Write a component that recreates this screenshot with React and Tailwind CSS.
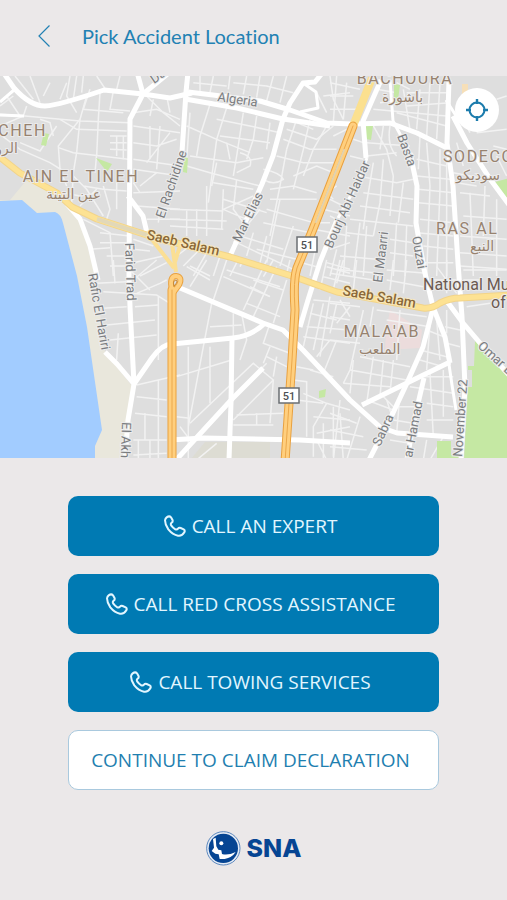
import { clsx } from "clsx"

const mainRoads = [
  "M3 72 L14 88 Q30 106 45 106 Q60 105 104 90 L143 94 L170 98 L192 93",
  "M137 72 L143 94 L130 119 L129 276 L130 307 L134 384",
  "M128 196 L143 216 L147 233",
  "M143 94 L170 72",
  "M188 72 L186 92 L182 152",
  "M188 92 L213 95 L260 101 L290 110 L327 123 L352 124 L390 123 L417 133 L447 148",
  "M185 99 L237 108 L283 119 L330 126",
  "M323 72 L315 82 L303 83 L290 103 L283 119 L273 156 L262 184 L248 216 L230 256",
  "M449 80 L447 143 L453 186 L458 263 L462 317 L465 387 L461 460",
  "M453 116 L467 143 L490 179 L510 206",
  "M410 153 L417 186 L416 223 L424 269 L433 307 L445 337 L450 363",
  "M381 80 L363 121 L366 158",
  "M337 220 L320 262 L308 300 L300 327",
  "M67 204 L80 219 L90 246 L98 280",
  "M105 352 L117 364 L134 384 L128 420 L125 460",
  "M134 384 L152 358 Q162 344 172 344 L233 338 Q252 336 265 323",
  "M180 288 L263 323 L283 330 L303 350 L350 400 L380 427 L397 433 L453 437",
  "M232 338 L231 403 L229 460",
  "M176 460 L233 398 L263 368",
  "M170 440 L203 438 L300 440 L350 443",
  "M433 308 L423 347 L407 383 L393 413 L369 460",
  "M362 405 L407 383 L450 362",
  "M424 378 L413 425 L407 460",
  "M446 300 L463 323 L480 343 L510 376",
]

const mediumRoads = [
  "M390 80 L393 121 L410 153",
  "M0 102 L14 90",
  "M303 83 L316 92 L318 108 L300 112",
  "M446 100 L460 122 L472 118",
  "M445 337 L452 385 L456 410",
  "M0 115 L24 116",
  "M367 158 L354 190 L338 218",
]

// Side streets, drawn district by district on a 3x finer grid
const districts = [
  {
    at: "translate(0 76) scale(0.3333)",
    streets: [
      "M0 115 L75 120 L240 135 L390 140",
      "M0 90 L40 60 M0 150 L70 120 L80 90 M20 60 L60 120",
      "M45 0 L100 70 M90 0 L120 80 M130 60 L150 20 M210 0 L200 60 L230 110 M180 70 L200 20 M230 0 L220 70",
      "M260 60 L240 130 L230 230 M300 50 L295 130 L290 240 M340 45 L330 100 L390 105",
      "M270 40 L250 100 L370 110 M250 0 L245 50 M290 0 L320 45 M360 0 L350 40",
      "M0 175 L60 220 L150 260 L190 285 M60 200 L120 225 L150 180 L170 150",
      "M120 130 L150 140 L160 180 M180 130 L230 160 L380 165 M175 215 L220 230 L385 250",
      "M240 130 L175 210 L180 280 L200 330 M230 230 L220 290 L215 380 M290 235 L285 290",
      "M330 200 L380 200 M330 220 L380 222 M350 180 L350 240 M370 180 L370 250 M330 180 L380 180",
      "M250 330 L310 340 L380 345 M220 300 L260 340 L310 420 M310 330 L330 400 L320 430 M350 320 L350 400",
      "M190 350 L240 360 L300 350 M240 390 L290 340 M400 250 L540 270 M400 280 L540 300",
      "M400 110 L470 100 L540 130 M400 150 L540 170 M430 50 L490 110 L540 150 M460 70 L450 120 M500 60 L510 110",
      "M400 200 L470 210 L530 190 M450 150 L450 250 M480 150 L470 280 M510 170 L440 260 M420 330 L470 290",
      "M400 350 L540 345 M410 390 L540 400 M440 430 L540 430 M480 400 L475 440 M400 320 L420 350",
      "M250 430 L330 470 L340 600 M300 470 L390 480 M300 500 L390 500 M320 540 L390 540 M330 570 L380 570",
      "M270 520 L330 515 M400 490 L460 510 M400 520 L450 525 M400 560 L490 540 M420 600 L500 560",
    ],
  },
  {
    at: "translate(170 76) scale(0.3333)",
    streets: [
      "M90 0 L90 50 M130 0 L120 50 M180 0 L175 40 M230 0 L220 55 M270 0 L260 65 M310 0 L290 75 M350 0 L330 80",
      "M70 20 L170 30 M190 20 L290 30 L370 50 M440 50 L470 110 M480 0 L490 70 L520 130 M460 60 L540 50",
      "M120 85 L90 180 L80 240 M170 95 L140 190 L115 380 M220 110 L200 240 L190 300 M50 150 L140 190 L240 230 M60 110 L50 250",
      "M140 130 L240 150 L330 170 M150 180 L300 200 M170 200 L180 250 M260 120 L250 190 L230 250 M300 140 L290 220",
      "M50 270 L120 290 L270 330 M60 240 L200 260 L280 245 M130 320 L250 340 M140 260 L125 330 M210 230 Q250 240 240 270 L200 290",
      "M280 280 Q330 290 340 310 Q310 330 280 310 M350 220 L330 330 L300 480 M380 130 L350 220 M420 130 L400 220 L370 340 M470 150 L430 220 L400 300",
      "M350 160 L440 190 L490 150 M340 190 L420 220 L500 220 M320 240 L400 260 L490 260 M370 300 L440 270 L490 290",
      "M380 140 L430 160 M300 340 L370 330 L440 350 M300 370 L440 370 M290 400 L430 440 M280 440 L420 470",
      "M160 370 L290 410 M160 400 L230 430 M160 340 L155 460 M160 400 L250 360 M200 310 L190 400 L220 440",
      "M0 400 L160 405 M0 430 L170 435 M0 450 L160 460 M50 400 L50 480 M80 400 L80 480 M110 330 L110 480",
      "M210 480 L340 520 M190 500 L270 400 M250 470 L230 540 M290 480 L270 560 M330 370 L290 560 M370 450 L330 570",
      "M260 520 L380 550 M200 500 L370 580 M460 400 L540 420 M450 440 L480 440 M440 500 L420 600 M480 520 L540 500",
      "M90 520 L40 570 M110 530 L70 600 M60 510 L20 540 M150 540 L130 600 M200 560 L180 600 M60 570 L120 600",
      "M430 460 L540 480 M490 370 L470 350 L500 330 M470 560 L540 580 M500 520 L480 600",
    ],
  },
  {
    at: "translate(330 76) scale(0.3333)",
    streets: [
      "M0 20 L90 40 M0 60 L70 60 M20 0 L10 140 M50 20 L40 130 M0 100 L80 100 M10 180 L50 160",
      "M140 40 L200 50 M150 80 L240 70 M130 100 L350 120 M220 40 L240 160 M270 40 L260 160 M300 20 L290 180 M330 20 L320 190",
      "M230 50 L350 50 M230 90 L360 80 M200 110 L350 150 M200 20 L240 40 M420 170 L400 130 M440 170 L530 160",
      "M110 200 L240 210 M110 240 L200 230 M130 150 L170 220 L190 300 M160 150 L150 220 M180 150 Q170 210 200 240",
      "M70 190 L100 200 M60 240 L100 250 M80 300 L200 320 L250 310 M100 350 L250 370 M90 390 L240 410",
      "M130 260 L110 380 L100 460 M160 250 L150 380 L130 480 M190 300 L180 420 M220 320 L205 440",
      "M260 250 L350 270 M260 300 L360 310 M265 340 L370 350 M265 380 L370 390 M270 430 L370 440 M260 470 L370 480",
      "M290 200 L300 330 L290 600 M330 220 L330 340 L320 600 M350 260 L350 600 M270 180 L265 280",
      "M60 430 L250 450 M50 470 L130 480 M180 490 L250 500 M180 530 L250 540 M30 540 L140 550 M20 580 L130 590",
      "M50 450 L40 600 M90 440 L70 600 M110 450 L100 600 M200 440 L190 600 M230 450 L225 600",
      "M390 350 L480 360 M380 320 L440 330 M400 420 L530 430 M390 480 L530 490 M390 530 L530 540 M390 570 L530 580",
      "M420 350 L430 600 M465 330 L460 480 M500 370 L500 600 M380 200 L400 270 M370 290 L470 310 M280 510 L370 520 M280 560 L370 560",
      "M0 370 L40 390 M0 420 L20 430 M530 60 L500 70 M490 210 L530 220 M500 240 L530 300",
    ],
  },
  {
    at: "translate(0 260) scale(0.3333)",
    streets: [
      "M290 70 L380 65 M310 95 L470 105 L510 130 M310 145 L380 140 M405 140 L475 135 M320 195 L465 180 M330 240 L470 225",
      "M340 0 L345 70 M410 100 L480 70 L500 60 M400 60 L470 0 M390 30 L450 90 M475 110 L475 300",
      "M410 375 L540 345 M410 410 L500 420 M475 360 L475 600 M405 460 L500 470 M435 460 L435 540 M400 540 L500 540 M415 540 L415 600 M450 540 L450 600 M400 585 L500 580",
      "M355 220 L350 300",
    ],
  },
  {
    at: "translate(170 260) scale(0.3333)",
    streets: [
      "M125 130 L100 260 L55 500 M55 260 L55 600 M190 160 L190 230 M120 200 L215 195 M120 260 L120 430 M20 350 L185 300",
      "M170 30 L330 80 M160 50 L300 110 M170 0 L150 60 L130 120 M50 20 L120 60 M110 0 L60 80 M60 490 L250 310 L310 360 L190 480",
      "M290 0 L220 150 M320 20 L250 170 M350 60 L310 190 M240 80 L300 110 M250 60 L340 90 M230 130 L330 170 M300 190 L280 250 L360 280",
      "M215 160 L230 240 L210 300 M290 290 L350 320 M300 260 L280 310 M320 290 L310 350 M310 360 L300 490 M270 330 L290 310",
      "M20 470 L60 475 M190 495 L310 495 M200 465 L340 460 M260 460 L260 495 M60 540 L30 500 M140 550 L80 600",
      "M380 320 L430 330 M370 360 L410 365 L410 530 M380 420 L460 430 M400 400 L470 430 L540 450 M470 430 L430 500 L430 590",
      "M440 520 L540 500 M460 490 L460 600 M490 440 L490 590 M510 460 L520 600 M430 470 L540 480 M440 540 L470 600",
      "M440 290 L480 240 M500 240 L460 340 M420 330 L490 350 M400 230 L540 250 M410 200 L540 210 M420 160 L500 180 M430 120 L540 130",
      "M430 130 L400 260 M460 130 L430 270 M480 110 L450 290 M510 120 L540 170 M500 190 L540 140 M460 50 L540 70 M470 20 L540 40 M470 0 L450 90 M510 0 L490 90",
      "M310 0 L280 50 M360 0 L350 40 M290 20 L360 40 M400 10 L440 20 M220 0 L210 20",
    ],
  },
  {
    at: "translate(330 260) scale(0.3333)",
    streets: [
      "M0 40 L130 60 M40 0 L20 70 M80 0 L70 90 M190 0 L180 90 M230 0 L220 100 M170 30 L290 40 M170 60 L280 80",
      "M0 130 L90 140 M0 170 L60 180 M0 240 L90 250 M20 130 L0 220 M100 150 L60 330 L40 370 M130 140 L120 200",
      "M140 150 L290 170 M170 180 L300 200 M90 290 L240 320 M60 330 L230 360 M70 300 L60 400 M130 290 L110 430 M160 300 L150 410 M190 300 L180 400",
      "M210 150 L200 300 M290 210 L340 230 M270 270 L350 290 M270 300 L340 320 M300 190 L290 330 M320 180 L330 300",
      "M40 370 L180 380 M110 420 L190 450 M150 400 L200 450 M170 420 L190 480 M90 470 L50 600 M30 420 L10 600 M0 460 L80 490 M0 510 L100 530 M0 560 L110 570",
      "M240 380 L370 400 M260 350 L370 350 M300 340 L310 530 M340 330 L340 470 M290 430 L370 440 M290 480 L370 480",
      "M200 440 L270 440 M190 480 L250 490 M180 540 L240 550 M210 400 L200 520 M290 540 L280 600 M340 530 L300 600 M320 20 L380 100 M310 60 L380 60 M350 0 L350 100",
      "M400 30 L530 30 M400 60 L450 60 M410 140 L480 130 M380 170 L350 130 M345 200 L390 210 M350 250 L390 260 M350 150 L350 220",
    ],
  },
]

const saebSalam =
  "M-4 154 L20 173 L57 193 L72 207 L97 219 L150 236 L230 257 L292 276 L337 292 L423 308 Q432 309 440 303 Q450 298 460 298 L510 295"
const highway = "M353 126 L313 229 L297 268 Q293 280 295 310 L292 360 L285 462"
const tunnel = "M172 290 L172 462"

const streetNames = [
  { text: "Algeria", x: 217, y: 101, turn: "rotate(8 217 101)" },
  { text: "El Rachidine", x: 164, y: 219, turn: "rotate(-71 164 219)" },
  { text: "Mar Elias", x: 240, y: 243, turn: "rotate(-64 240 243)" },
  { text: "Bourj Abi Haidar", x: 332, y: 249, turn: "rotate(-66 332 249)" },
  { text: "Basta", x: 397, y: 136, turn: "rotate(70 397 136)" },
  { text: "El Maarri", x: 382, y: 283, turn: "rotate(-83 382 283)" },
  { text: "Ouzai", x: 412, y: 237, turn: "rotate(80 412 237)" },
  { text: "Farid Trad", x: 125, y: 243, turn: "rotate(88 125 243)" },
  { text: "Rafic El Hariri", x: 88, y: 274, turn: "rotate(80 88 274)" },
  { text: "El Akhtal", x: 122, y: 422, turn: "rotate(92 122 422)" },
  { text: "Sabra", x: 380, y: 447, turn: "rotate(-65 380 447)" },
  { text: "Omar Hamad", x: 408, y: 478, turn: "rotate(-79 408 478)" },
  { text: "November 22", x: 462, y: 457, turn: "rotate(-86 462 457)" },
  { text: "Omar Beyhum", x: 477, y: 347, turn: "rotate(42 477 347)" },
  { text: "Dakar", x: 154, y: 84, turn: "rotate(-35 154 84)" },
]

const areaNames = [
  { text: "RAOUCHEH", x: 47, y: 136, anchor: "end" },
  { text: "AIN EL TINEH", x: 81, y: 182, anchor: "middle" },
  { text: "BACHOURA", x: 405, y: 84, anchor: "middle" },
  { text: "SODECO", x: 443, y: 162, anchor: "start" },
  { text: "RAS AL", x: 436, y: 234, anchor: "start" },
  { text: "MALA'AB", x: 382, y: 337, anchor: "middle" },
]

const arabicNames = [
  { text: "الروشة", x: -24, y: 153 },
  { text: "عين التينة", x: 46, y: 199 },
  { text: "باشورة", x: 382, y: 102 },
  { text: "سوديكو", x: 456, y: 180 },
  { text: "النبع", x: 470, y: 251 },
  { text: "الملعب", x: 359, y: 354 },
]

function RouteShield({ x, y }) {
  return (
    <g>
      <rect x={x} y={y} width="20" height="15" fill="#fff" stroke="#6b6f73" strokeWidth="1.5" />
      <text x={x + 10} y={y + 12} textAnchor="middle" className="fill-[#4c5054] text-[11px] font-medium">
        51
      </text>
    </g>
  )
}

function CityMap() {
  return (
    <svg
      viewBox="0 76 507 382"
      className="block h-auto w-full bg-[#dedede] font-[Roboto,'DejaVu_Sans',sans-serif]"
      role="img"
      aria-label="Map of Beirut"
    >
      {/* land, parks and sea */}
      <path d="M0 160 L20 173 L60 196 L82 225 L95 275 L105 352 L132 386 L124 460 H0 Z" fill="#e9e7dc" />
      <path d="M0 160 L18 172 L30 176 L10 200 H0 Z" fill="#dedede" />
      <path d="M0 201 L22 200 L37 213 L55 212 Q61 214 63 223 L77 276 L87 327 L102 430 L95 446 V460 H0 Z" fill="#a2ccff" />
      <path d="M390 310 L422 330 L420 348 L385 350 L386 332 Z" fill="#ecdcdc" />
      <path d="M205 442 H270 V460 H190 Z" fill="#dddcd3" />

      <g stroke="#f2f2f2" strokeWidth="4.5" fill="none">
        {districts.map((district) => (
          <g key={district.at} transform={district.at}>
            {district.streets.map((d) => (
              <path key={d} d={d} />
            ))}
          </g>
        ))}
      </g>

      <g fill="#c5e8a3">
        <path d="M475 341 L510 378 V460 H464 L468 387 H472 V370 H468 V366 H474 Z" />
        <path d="M437 441 H451 V455 H461 V460 H437 Z" />
        <path d="M96 158 L112 164 L107 172 Z" />
        <path d="M44 133 L49 134 L46 146 L41 145 Z" />
        <path d="M184 157 L188 158 L187 173 L183 172 Z" />
        <path d="M366 125 L373 126 L371 140 L366 139 Z" />
        <path d="M394 84 L400 85 L397 107 L394 100 Z" />
        <path d="M495 182 L510 178 V202 Z" />
        <path d="M319 391 L326 389 L325 397 L319 398 Z" />
      </g>

      <g fill="none" stroke="#fff" strokeLinejoin="round">
        {mediumRoads.map((d) => (
          <path key={d} d={d} strokeWidth="3" />
        ))}
        {mainRoads.map((d) => (
          <path key={d} d={d} strokeWidth="5" />
        ))}
      </g>

      {/* avenues */}
      <g fill="none" strokeLinejoin="round">
        <path d={saebSalam} stroke="#f2d48a" strokeWidth="7" />
        <path d={saebSalam} stroke="#fde293" strokeWidth="5" />
        <path d="M97 219 L150 236" stroke="#e2d8b8" strokeWidth="4" />
        <path d="M150 237 L174 268 M172 244 L176 272 M180 246 L175 262" stroke="#fbdf94" strokeWidth="4" />
        <path d="M372 78 L353 126" stroke="#fbe08f" strokeWidth="8" />
        <path d="M465 84 V96" stroke="#f6dfb8" strokeWidth="6" />
      </g>

      {/* highways */}
      <g fill="none" strokeLinejoin="round" strokeLinecap="round">
        <path d={highway} stroke="#e9a13f" strokeWidth="9" />
        <path d={highway} stroke="#ffcf7e" strokeWidth="7" />
        <path d={highway} stroke="#eba84c" strokeWidth="1" />
        <path d="M344 150 L316 222" stroke="#e0d2b2" strokeWidth="2" />
        <path d={tunnel} stroke="#e9a13f" strokeWidth="9" />
        <path d="M172 290 Q169 276 176 276 Q183 277 179 285 L173 293" stroke="#e9a13f" strokeWidth="6" />
        <path d="M172 290 Q169 276 176 276 Q183 277 179 285 L173 293" stroke="#ffcf7e" strokeWidth="4" />
        <path d={tunnel} stroke="#ffcf7e" strokeWidth="7" />
        <path d={tunnel} stroke="#eba84c" strokeWidth="1" />
        <path d="M174 286 Q172 281 176 280 Q179 281 174 286" stroke="#c98a35" strokeWidth="1" />
      </g>

      <RouteShield x={297} y={237} />
      <RouteShield x={279} y={388} />

      <g className="fill-[#7b7d80] text-[13px]" stroke="#ececec" strokeWidth="2" paintOrder="stroke">
        {streetNames.map((street) => (
          <text key={street.text} x={street.x} y={street.y} transform={street.turn}>
            {street.text}
          </text>
        ))}
      </g>

      <g className="fill-[#8a6838] text-[14px] font-medium" stroke="#f6e7bd" strokeWidth="2" paintOrder="stroke">
        <text x="146" y="239" transform="rotate(13 146 239)">Saeb Salam</text>
        <text x="342" y="295" transform="rotate(10 342 295)">Saeb Salam</text>
      </g>

      <g className="fill-[#97826f] text-[16px] tracking-widest" stroke="#ebebeb" strokeWidth="2" paintOrder="stroke">
        {areaNames.map((area) => (
          <text key={area.text} x={area.x} y={area.y} textAnchor={area.anchor}>
            {area.text}
          </text>
        ))}
      </g>

      <g className="fill-[#97826f] text-[14px] font-medium" stroke="#ebebeb" strokeWidth="2" paintOrder="stroke">
        {arabicNames.map((area) => (
          <text key={area.text} x={area.x} y={area.y}>
            {area.text}
          </text>
        ))}
      </g>

      <g className="fill-[#6b5a52] text-[16px]" stroke="#ebebeb" strokeWidth="2" paintOrder="stroke">
        <text x="423" y="290">National Museum</text>
        <text x="491" y="308">of Beirut</text>
      </g>
    </svg>
  )
}

function PhoneIcon() {
  return (
    <svg viewBox="0 0 66 66" className="size-[22px] shrink-0" fill="none" stroke="currentColor" strokeWidth="6" strokeLinejoin="round" aria-hidden="true">
      <path d="M8 7 Q16 1 21 7 L26 16 Q27 21 22 24 Q19 27 22 32 Q27 39 34 43 Q39 45 42 41 Q45 37 50 39 L59 43 Q64 46 61 52 Q54 64 42 62 Q26 59 13 43 Q3 29 3 16 Q4 10 8 7 Z" />
    </svg>
  )
}

function LocateIcon() {
  return (
    <svg viewBox="0 0 24 24" className="size-6" fill="none" stroke="currentColor" strokeWidth="2" aria-hidden="true">
      <circle cx="12" cy="12" r="7.5" />
      <path d="M12 1 V6 M12 18 V23 M1 12 H6 M18 12 H23" strokeWidth="2.4" />
    </svg>
  )
}

function ActionButton({ outlined, children }) {
  return (
    <button
      type="button"
      className={clsx(
        "flex h-[60px] w-full items-center justify-center gap-1.5 rounded-[10px] pr-1.5 text-[19px]",
        outlined ? "border border-[#a9c9de] bg-white text-[#1f7fb0]" : "bg-[#007ab3] text-[#e2f6ff]"
      )}
    >
      {!outlined && <PhoneIcon />}
      {children}
    </button>
  )
}

function Logo() {
  return (
    <div className="flex items-center justify-center gap-1.5 text-[#064593]">
      <svg viewBox="0 0 105 105" className="size-[35px]" aria-hidden="true">
        <circle cx="52" cy="52" r="50" fill="#e6ecf5" stroke="#3f74b5" strokeWidth="2.5" />
        <circle cx="52" cy="52" r="44" fill="currentColor" />
        <circle cx="46" cy="37" r="6" fill="#fff" />
        <path d="M21 24 L29 20 L31 46 L37 56 L46 58 L48 69 Q66 74 89 63 Q78 80 56 84 L41 84 L38 70 L28 68 L17 60 L24 50 Z" fill="#fff" />
      </svg>
      <span className="font-[Inter,sans-serif] text-[25px] font-extrabold">SNA</span>
    </div>
  )
}

export default function App() {
  return (
    <div className="min-h-screen bg-[#ebe8e9] font-['Open_Sans','Noto_Sans',sans-serif]">
      <header className="flex h-[76px] items-center gap-8 px-[38px] pb-1 text-[#2281b3]">
        <button type="button" aria-label="Back">
          <svg viewBox="0 0 12 22" className="h-[22px] w-3" fill="none" stroke="currentColor" strokeWidth="1.2">
            <path d="M11.5 0.5 L1 11 L11.5 21.5" />
          </svg>
        </button>
        <h1 className="font-[Lato,sans-serif] text-[20px] [font-variant-ligatures:none]">Pick Accident Location</h1>
      </header>

      <section className="relative overflow-hidden">
        <CityMap />
        <button
          type="button"
          aria-label="Use my location"
          className="absolute top-3 right-2 flex size-11 items-center justify-center rounded-full bg-white text-[#1c7cad]"
        >
          <LocateIcon />
        </button>
      </section>

      <main className="flex flex-col gap-[18px] px-[68px] pt-[38px]">
        <ActionButton>CALL AN EXPERT</ActionButton>
        <ActionButton>CALL RED CROSS ASSISTANCE</ActionButton>
        <ActionButton>CALL TOWING SERVICES</ActionButton>
        <ActionButton outlined>CONTINUE TO CLAIM DECLARATION</ActionButton>
      </main>

      <footer className="pt-10 pb-8">
        <Logo />
      </footer>
    </div>
  )
}
